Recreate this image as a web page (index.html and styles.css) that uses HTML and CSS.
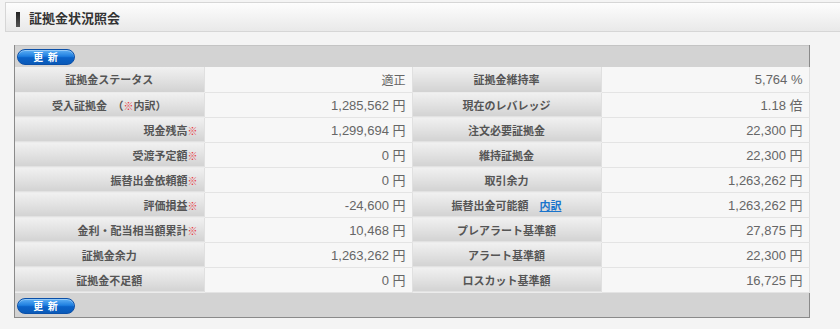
FILE: index.html
```html
<!DOCTYPE html>
<html lang="ja">
<head>
<meta charset="utf-8">
<title>証拠金状況照会</title>
<link rel="stylesheet" href="styles.css">
</head>
<body>
<div class="title-bar">
  <span class="mark"></span>
  <h1 class="title">証拠金状況照会</h1>
</div>
<div class="panel">
  <div class="bar"><button class="btn" type="button">更 新</button></div>
  <table class="grid">
    <colgroup><col class="c-l"><col class="c-v"><col class="c-l"><col class="c-v"></colgroup>
    <tr><td class="lbl">証拠金ステータス</td><td class="val"><span class="jp">適正</span></td><td class="lbl">証拠金維持率</td><td class="val">5,764 %</td></tr>
    <tr><td class="lbl">受入証拠金　（<span class="rd">※</span>内訳）</td><td class="val">1,285,562 円</td><td class="lbl">現在のレバレッジ</td><td class="val">1.18 倍</td></tr>
    <tr><td class="lbl r">現金残高<span class="rd">※</span></td><td class="val">1,299,694 円</td><td class="lbl">注文必要証拠金</td><td class="val">22,300 円</td></tr>
    <tr><td class="lbl r">受渡予定額<span class="rd">※</span></td><td class="val">0 円</td><td class="lbl">維持証拠金</td><td class="val">22,300 円</td></tr>
    <tr><td class="lbl r">振替出金依頼額<span class="rd">※</span></td><td class="val">0 円</td><td class="lbl">取引余力</td><td class="val">1,263,262 円</td></tr>
    <tr><td class="lbl r">評価損益<span class="rd">※</span></td><td class="val">-24,600 円</td><td class="lbl">振替出金可能額　<a class="lnk" href="#">内訳</a></td><td class="val">1,263,262 円</td></tr>
    <tr><td class="lbl r">金利・配当相当額累計<span class="rd">※</span></td><td class="val">10,468 円</td><td class="lbl">プレアラート基準額</td><td class="val">27,875 円</td></tr>
    <tr><td class="lbl">証拠金余力</td><td class="val">1,263,262 円</td><td class="lbl">アラート基準額</td><td class="val">22,300 円</td></tr>
    <tr><td class="lbl">証拠金不足額</td><td class="val">0 円</td><td class="lbl">ロスカット基準額</td><td class="val">16,725 円</td></tr>
  </table>
  <div class="bar bar-bottom"><button class="btn" type="button">更 新</button></div>
</div>
</body>
</html>
```
FILE: styles.css
```css
* { box-sizing: border-box; }
html, body { margin: 0; padding: 0; }
body {
  background: #f4f4f4;
  font-family: "Noto Sans CJK JP", "Noto Sans", sans-serif;
  color: #555;
  width: 840px;
  height: 329px;
  overflow: hidden;
}
.title-bar {
  margin: 2px 0 0 5px;
  height: 30px;
  border: 1px solid #d6d6d6;
  border-right: none;
  background: linear-gradient(#fdfdfd, #e9e9e9);
  display: flex;
  align-items: center;
  padding-left: 10px;
}
.mark {
  width: 4px;
  height: 15px;
  margin-top: 4px;
  background: linear-gradient(#222, #555);
}
.title {
  margin: 0 0 0 9px;
  font-size: 13px;
  font-weight: bold;
  color: #333;
  line-height: 1;
}
.panel {
  margin: 13px 0 0 14px;
  width: 796px;
  border-left: 1px solid #8a8a8a;
  border-right: 1px solid #8a8a8a;
  border-bottom: 1px solid #8a8a8a;
  background: #d4d4d4;
}
.bar {
  height: 22px;
  padding: 3px 0 0 2px;
  background: #d3d3d3;
  border-top: 1px solid #c4c4c4;
}
.bar-bottom {
  height: 24px;
  border-top: none;
  padding-top: 5px;
}
.btn {
  display: block;
  width: 58px;
  height: 16px;
  padding: 0;
  border: 1px solid #0a4fa8;
  border-radius: 8px;
  background: linear-gradient(#5fb0f5 0%, #1f7fe0 45%, #0b62c8 55%, #0a5ab8 100%);
  color: #fff;
  font-family: "Noto Sans CJK JP", sans-serif;
  font-size: 10px;
  font-weight: bold;
  line-height: 14px;
  letter-spacing: 1px;
  text-align: center;
  box-shadow: inset 0 1px 0 rgba(255,255,255,0.35);
}
.grid {
  width: 100%;
  border-collapse: collapse;
  table-layout: fixed;
}
.c-l { width: 189px; }
.c-v { width: 208px; }
.grid td {
  height: 25px;
  padding: 0 6px;
  border-bottom: 1px solid #e4e4e4;
  white-space: nowrap;
  overflow: hidden;
}
.lbl {
  background: linear-gradient(#f1f1f1 0%, #e2e2e2 50%, #d2d2d2 100%);
  font-size: 11px;
  font-weight: bold;
  color: #555;
  text-align: center;
  border-bottom-color: #ececec !important;
}
.lbl.r { text-align: right; }
.val {
  background: #f7f7f7;
  text-align: right;
  font-family: "Liberation Sans", "Noto Sans CJK JP", sans-serif;
  font-size: 13px;
  color: #666;
  border-left: 1px solid #e0e0e0;
  border-right: 1px solid #e0e0e0;
}
.jp { font-size: 12px; }
.rd { color: #e8373f; font-weight: bold; font-size: 10px; }
.lnk {
  color: #1a74cc;
  text-decoration: underline;
  font-weight: bold;
}
```
